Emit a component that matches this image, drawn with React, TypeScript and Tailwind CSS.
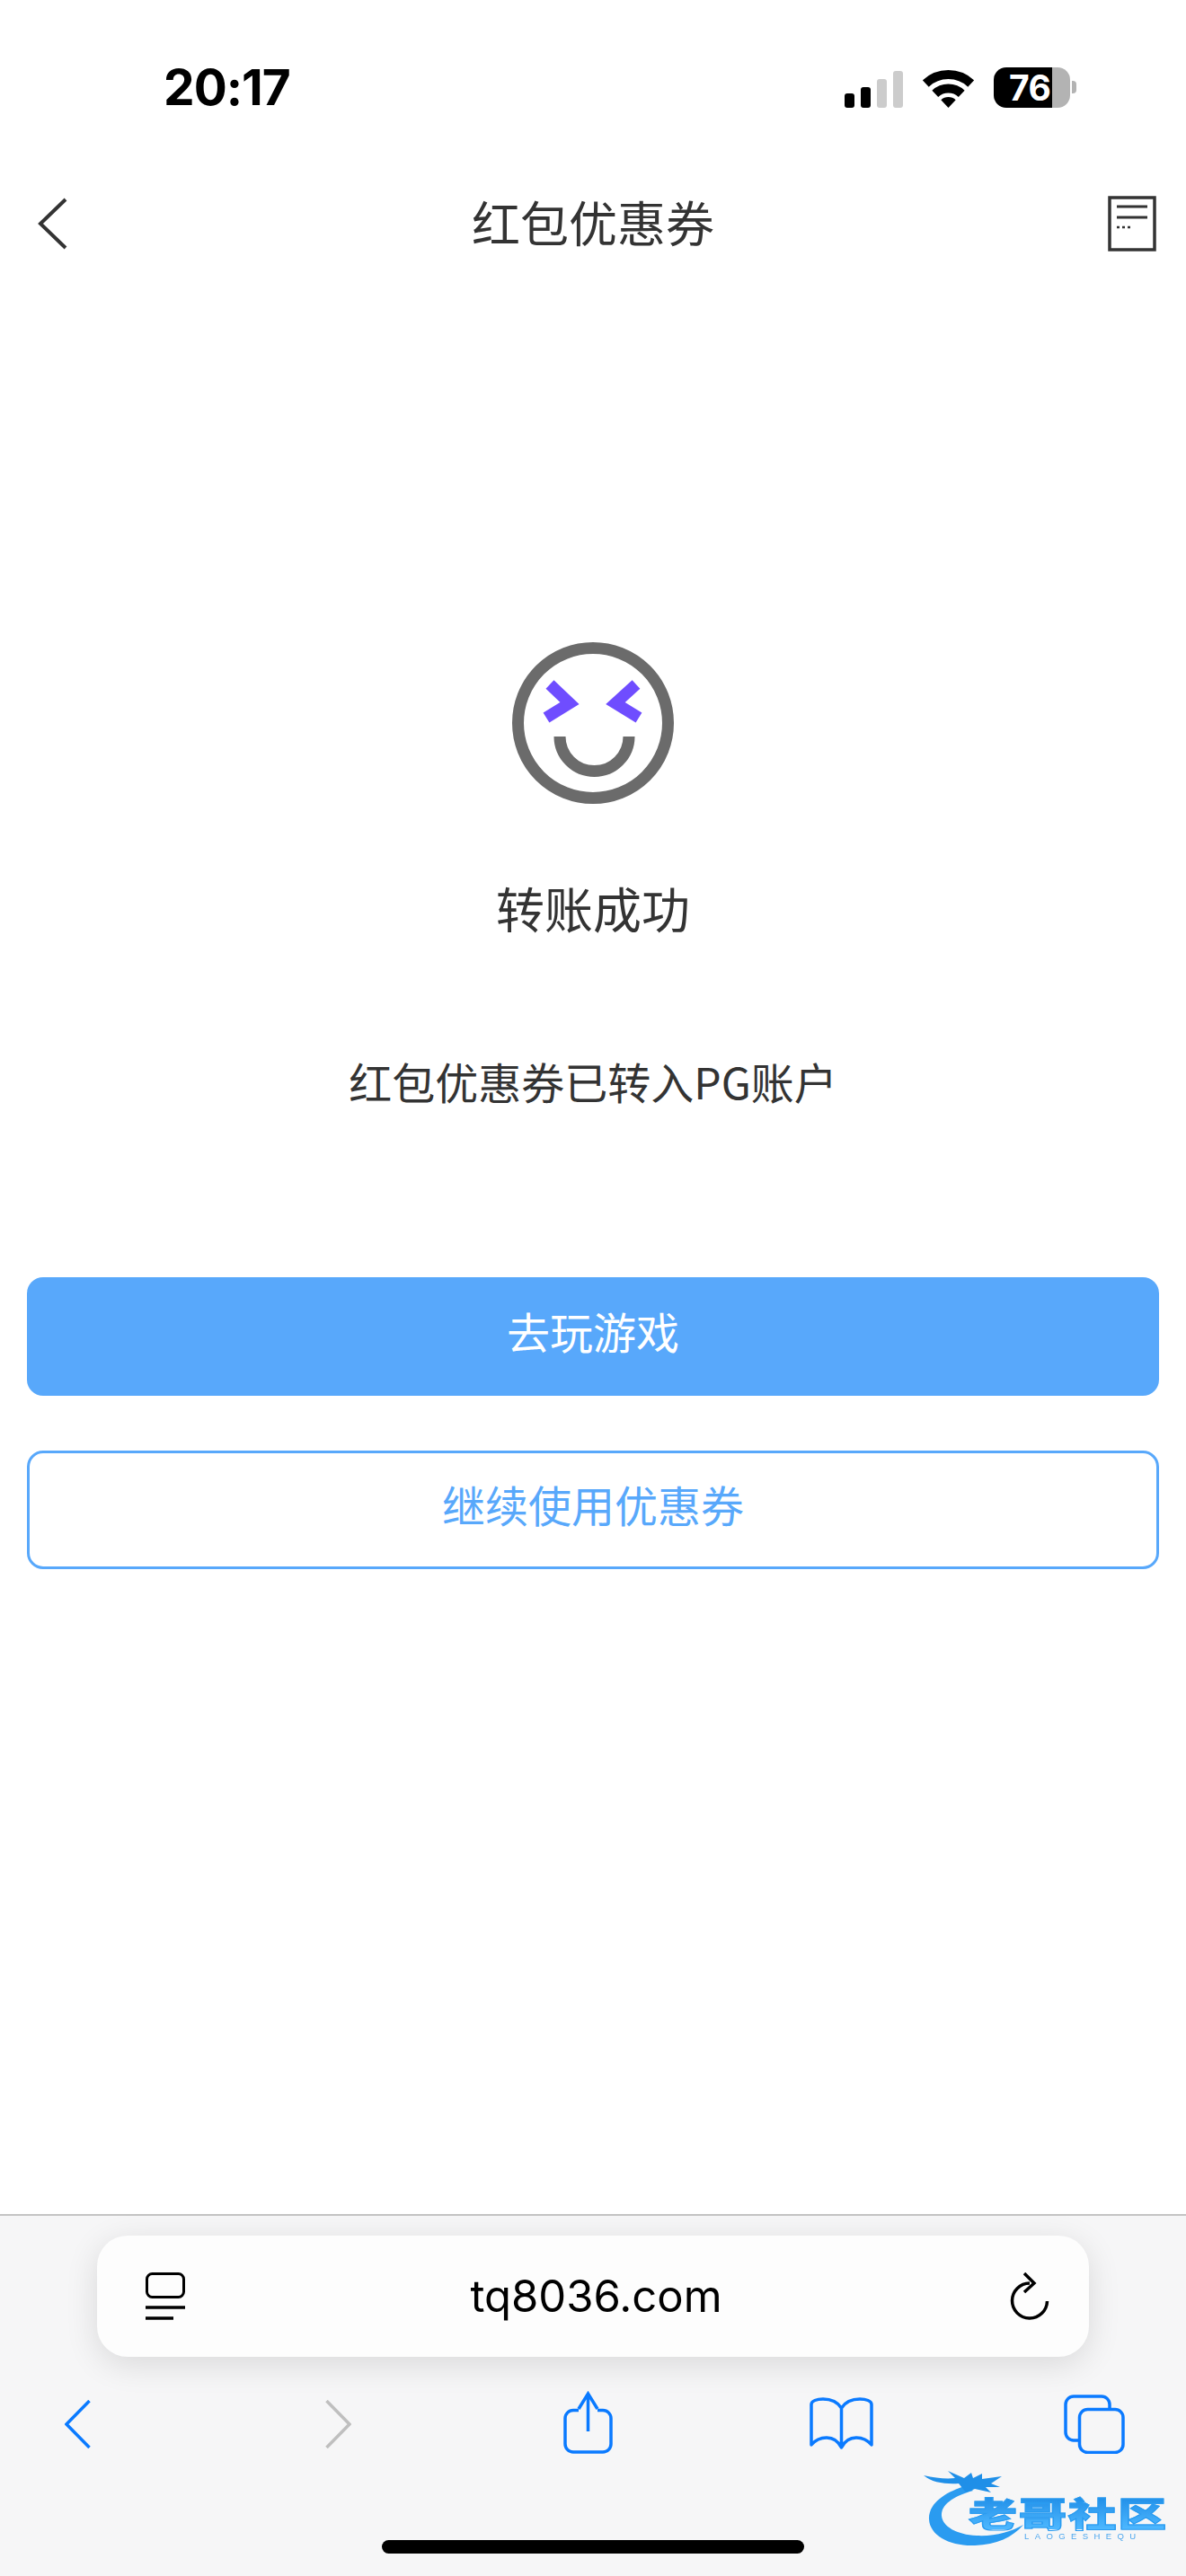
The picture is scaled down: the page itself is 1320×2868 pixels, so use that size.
const cjk = "font-['Noto_Sans_CJK_SC','Noto_Sans',sans-serif]";

const SignalBars = () => (
  <div className="flex items-end gap-[7px] h-[41px]">
    <div className="w-[11px] h-[16px] rounded-[3px] bg-black" />
    <div className="w-[11px] h-[23px] rounded-[3px] bg-black" />
    <div className="w-[11px] h-[32px] rounded-[3px] bg-[#cccccc]" />
    <div className="w-[11px] h-[41px] rounded-[3px] bg-[#cccccc]" />
  </div>
);

const Wifi = () => (
  <svg width="57" height="42" viewBox="0 0 57 42" fill="none">
    <path d="M3.3 15A37 37 0 0 1 53.7 15" stroke="#000" strokeWidth="10" />
    <path d="M13.8 26.3A21.5 21.5 0 0 1 43.2 26.3" stroke="#000" strokeWidth="10" />
    <path d="M28.5 42L20.3 33.2A12 12 0 0 1 36.7 33.2Z" fill="#000" />
  </svg>
);

const Battery = () => (
  <div className="flex items-center gap-[2px]">
    <div className="relative flex w-[85px] h-[45px] rounded-[14px] overflow-hidden">
      <div className="w-[65px] bg-black" />
      <div className="flex-1 bg-[#b3b3b3]" />
      <span className="absolute left-[17px] top-0 leading-[45px] text-[39px] font-bold text-white font-['Inter',sans-serif] tracking-[-0.5px]">
        76
      </span>
    </div>
    <div className="w-[5px] h-[14px] rounded-r-[4px] bg-[#b3b3b3]" />
  </div>
);

const Smiley = () => (
  <svg width="180" height="180" viewBox="0 0 180 180" fill="none">
    <circle cx="90" cy="90" r="83.5" stroke="#6b6b6b" strokeWidth="13" />
    <path d="M42 47L64 68L38 84" stroke="#6f4dff" strokeWidth="13" />
    <path d="M138 47L115 68L141 84" stroke="#6f4dff" strokeWidth="13" />
    <path d="M53 105A38.5 38.5 0 0 0 130 105" stroke="#6b6b6b" strokeWidth="13" />
  </svg>
);

const Watermark = () => (
  <div className="absolute left-[1027px] top-[2745px] w-[275px] h-[92px] blur-[0.5px]">
    <svg className="absolute left-0 top-0" width="130" height="92" viewBox="0 0 130 92">
      <path
        d="M50 22C22 30 6 44 7 60C8 78 30 90 58 89C82 88 100 80 112 66C98 74 80 79 60 78C38 77 22 68 21 56C20 44 34 34 56 28Z"
        fill="#2a9bf0"
      />
      <path
        d="M1 11C14 14 26 15 36 14L28 6L46 14L54 8L56 14L66 9L66 15L88 12L76 20L86 24L70 24L76 30L58 26L48 30L40 20C26 21 10 19 1 11Z"
        fill="#1f8fe8"
      />
    </svg>
    <span className={`absolute left-[51px] top-[33px] block origin-left scale-x-[1.42] whitespace-nowrap text-[38px] leading-[38px] font-black tracking-[1px] bg-linear-to-b from-[#1d8ce6] to-[#4db8ff] bg-clip-text text-transparent [-webkit-text-stroke:1px_#2a9bf0] ${cjk}`}>
      老哥社区
    </span>
    <span className="absolute left-[113px] top-[74px] text-[9.5px] leading-[10px] tracking-[6.4px] text-[#4ba6ee] font-['Liberation_Sans',sans-serif]">
      LAOGESHEQU
    </span>
  </div>
);

export default function App() {
  return (
    <div className={`relative w-[1320px] h-[2868px] bg-white flex flex-col overflow-hidden ${cjk}`}>
      {/* status bar */}
      <div className="h-[194px] flex items-center pl-[182px] pr-[122px] shrink-0">
        <span className="text-[55px] font-bold text-black font-['Inter',sans-serif] tracking-[-1px] leading-none">
          20:17
        </span>
        <div className="ml-auto flex items-end gap-[22px]">
          <SignalBars />
          <Wifi />
          <Battery />
        </div>
      </div>

      {/* nav */}
      <div className="h-[110px] flex items-center pl-[42px] pr-[33px] shrink-0">
        <div className="w-[100px]">
          <svg width="33" height="58" viewBox="0 0 33 58" fill="none">
            <path d="M31 2L3 29L31 56" stroke="#333" strokeWidth="4" />
          </svg>
        </div>
        <div className="flex-1 pr-[9px] pb-[5px] text-center text-[54px] leading-[60px] text-[#333333]">红包优惠券</div>
        <div className="w-[100px] flex justify-end">
          <svg width="54" height="62" viewBox="0 0 54 62" fill="none">
            <rect x="2" y="2" width="50" height="58" stroke="#333" strokeWidth="3.5" />
            <path d="M10 12H44M10 24H44" stroke="#333" strokeWidth="3" />
            <path d="M10 35H27" stroke="#333" strokeWidth="2.5" strokeDasharray="3 3" />
          </svg>
        </div>
      </div>

      {/* result */}
      <div className="flex-1 flex flex-col items-center pt-[411px] px-[30px]">
        <Smiley />
        <div className="mt-[86px] text-[54px] leading-[60px] text-[#333333]">转账成功</div>
        <div className="mt-[132px] text-[48px] leading-[60px] text-[#333333]">红包优惠券已转入PG账户</div>
        <button className="mt-[189px] w-full h-[132px] pb-[15px] rounded-[18px] bg-[#58a8fb] text-white text-[48px]">
          去玩游戏
        </button>
        <button className="mt-[61px] w-full h-[132px] pb-[15px] rounded-[18px] border-[3px] border-[#58a8fb] bg-white text-[#58a8fb] text-[48px]">
          继续使用优惠券
        </button>
      </div>

      {/* safari toolbar */}
      <div className="h-[403px] shrink-0 bg-[#f6f6f7] border-t-2 border-[#c4c4c4] flex flex-col">
        <div className="mt-[22px] mx-[108px] h-[135px] rounded-[34px] bg-[#fdfdfd] shadow-[0_8px_36px_rgba(0,0,0,0.12)] flex items-center pl-[54px] pr-[44px]">
          <svg width="44" height="54" viewBox="0 0 44 54" fill="none">
            <rect x="1.5" y="1.5" width="41" height="26" rx="6" stroke="#000" strokeWidth="3" />
            <path d="M0 39H44" stroke="#000" strokeWidth="3.5" />
            <path d="M0 51H31" stroke="#000" strokeWidth="3.5" />
          </svg>
          <div className="flex-1 pr-[3px] text-center text-[49px] leading-none text-black font-['Inter',sans-serif]">tq8036.com</div>
          <svg width="44" height="54" viewBox="0 0 44 54" fill="none">
            <path d="M22 12A19.5 19.5 0 1 0 41.5 32" stroke="#000" strokeWidth="3.5" />
            <path d="M16 1L27 12L16 22" stroke="#000" strokeWidth="3.5" />
          </svg>
        </div>

        <div className="mt-[38px] h-[70px] flex items-start pl-[72px]">
          <svg className="mt-[10px]" width="29" height="54" viewBox="0 0 29 54" fill="none">
            <path d="M27.5 1L2 27L27.5 53" stroke="#0a7aff" strokeWidth="3.5" />
          </svg>
          <svg className="mt-[10px] ml-[261px]" width="29" height="54" viewBox="0 0 29 54" fill="none">
            <path d="M1.5 1L27 27L1.5 53" stroke="#bfbfbf" strokeWidth="3.5" />
          </svg>
          <svg className="ml-[236px]" width="55" height="70" viewBox="0 0 55 70" fill="none">
            <path d="M27.5 45V3M17 20L27.5 3L38 20" stroke="#0a7aff" strokeWidth="3.5" />
            <path
              d="M17 21.5H11A9 9 0 0 0 2 30.5V59A9 9 0 0 0 11 68H44A9 9 0 0 0 53 59V30.5A9 9 0 0 0 44 21.5H38"
              stroke="#0a7aff"
              strokeWidth="3.5"
            />
          </svg>
          <svg className="mt-[7px] ml-[219px]" width="71" height="58" viewBox="0 0 71 58" fill="none">
            <path
              d="M35.5 12C31 5 24 2 15 2C8 2 2 4 2 8V53C7 47 13 45 19 45C26 45 32 49 35.5 56C39 49 45 45 52 45C58 45 64 47 69 53V8C69 4 63 2 56 2C47 2 40 5 35.5 12V56"
              stroke="#0a7aff"
              strokeWidth="3.5"
              strokeLinejoin="round"
            />
          </svg>
          <svg className="mt-[4px] ml-[212px]" width="68" height="66" viewBox="0 0 68 66" fill="none">
            <path
              d="M16 51H11A9 9 0 0 1 2 42V11A9 9 0 0 1 11 2H42A9 9 0 0 1 51 11V15"
              stroke="#0a7aff"
              strokeWidth="3.5"
            />
            <rect x="17.5" y="16.5" width="48.5" height="48" rx="9" stroke="#0a7aff" strokeWidth="3.5" />
          </svg>
        </div>

        <div className="mt-[96px] mx-auto w-[470px] h-[15px] rounded-full bg-black" />
      </div>

      <Watermark />
    </div>
  );
}
